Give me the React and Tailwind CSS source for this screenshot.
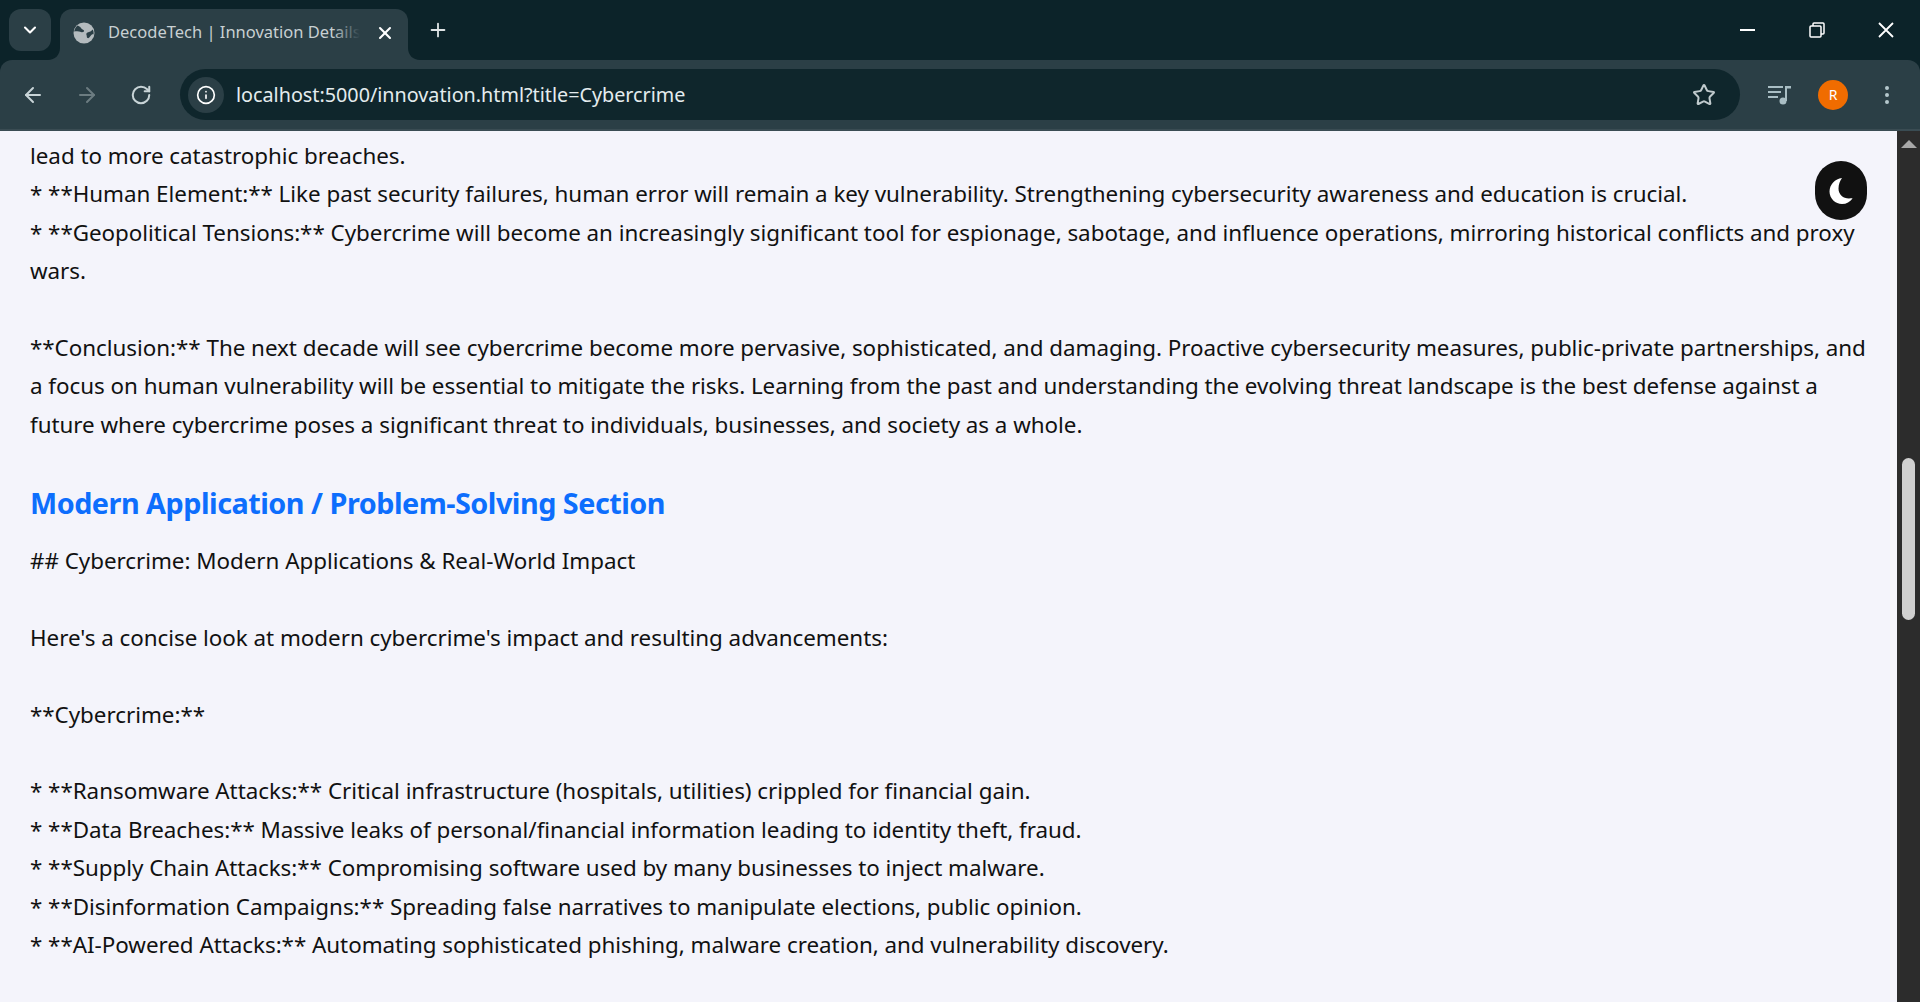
import { ArrowLeft, ArrowRight, RotateCw, Info, Star, ChevronDown, X, Plus, MoreVertical } from 'lucide-react';

const lines = [
  'lead to more catastrophic breaches.',
  '* **Human Element:** Like past security failures, human error will remain a key vulnerability. Strengthening cybersecurity awareness and education is crucial.',
  '* **Geopolitical Tensions:** Cybercrime will become an increasingly significant tool for espionage, sabotage, and influence operations, mirroring historical conflicts and proxy',
  'wars.',
  '',
  '**Conclusion:** The next decade will see cybercrime become more pervasive, sophisticated, and damaging. Proactive cybersecurity measures, public-private partnerships, and',
  'a focus on human vulnerability will be essential to mitigate the risks. Learning from the past and understanding the evolving threat landscape is the best defense against a',
  'future where cybercrime poses a significant threat to individuals, businesses, and society as a whole.',
];

const lines2 = [
  '## Cybercrime: Modern Applications & Real-World Impact',
  '',
  "Here's a concise look at modern cybercrime's impact and resulting advancements:",
  '',
  '**Cybercrime:**',
  '',
  '* **Ransomware Attacks:** Critical infrastructure (hospitals, utilities) crippled for financial gain.',
  '* **Data Breaches:** Massive leaks of personal/financial information leading to identity theft, fraud.',
  '* **Supply Chain Attacks:** Compromising software used by many businesses to inject malware.',
  '* **Disinformation Campaigns:** Spreading false narratives to manipulate elections, public opinion.',
  '* **AI-Powered Attacks:** Automating sophisticated phishing, malware creation, and vulnerability discovery.',
];

const TextLine = ({ text }) => (
  <div className="h-[38.4px] whitespace-nowrap leading-[38.4px]">{text}</div>
);

const TabBar = () => (
  <div className="flex h-[60px] bg-[#0c2329] pl-[9px] pt-[9px]">
    <div className="flex h-[42px] w-[42px] items-center justify-center rounded-xl bg-[#2b3f46] text-white">
      <ChevronDown size={20} strokeWidth={2.5} />
    </div>
    <div className="relative ml-[9px] flex h-[51px] w-[348px] items-center rounded-t-xl bg-[#2b3f46] pb-[4px] pl-[13px] pr-[13px]">
      <svg className="absolute -left-[12px] bottom-0" width="12" height="12" viewBox="0 0 12 12">
        <path d="M12 0V12H0C7 12 12 7 12 0Z" fill="#2b3f46" />
      </svg>
      <svg className="absolute -right-[12px] bottom-0" width="12" height="12" viewBox="0 0 12 12">
        <path d="M0 0V12H12C5 12 0 7 0 0Z" fill="#2b3f46" />
      </svg>
      {/* chrome's default globe favicon */}
      <svg className="shrink-0" width="22" height="22" viewBox="0 0 22 22">
        <circle cx="11" cy="11" r="10.500" fill="#b4bbbe" />
        <path d="M4.500 3.500C6 4.500 7 4.500 8 6C9 7.500 10.500 7.500 11 8.500C11.500 10 9.500 10.500 8 10C6 9.300 4.500 9 1.200 9.500C1.500 7 2.800 5 4.500 3.500Z" fill="#2b3f46" />
        <path d="M19.800 7.500C20.500 9 20.800 10.500 20.500 12.500C19.500 12 18.500 12.500 17.500 14C16.500 15.500 15.500 16.500 14.500 16C13.500 15.500 14 14 13.500 13C13 12 13.500 11 14.500 10.500C16.500 10 18.500 9 19.800 7.500Z" fill="#2b3f46" />
      </svg>
      <div className="relative ml-[13px] w-[252px] overflow-hidden whitespace-nowrap text-[16.5px] text-[#c8d0d2]">
        DecodeTech | Innovation Details
        <div className="absolute inset-y-0 right-0 w-[28px] bg-gradient-to-r from-transparent to-[#2b3f46]" />
      </div>
      <X size={20} strokeWidth={2.5} className="ml-auto text-white" />
    </div>
    <div className="ml-[9px] flex h-[42px] w-[42px] items-center justify-center text-[#dfe4e5]">
      <Plus size={22} strokeWidth={2} />
    </div>
    <div className="ml-auto flex h-[42px] text-white">
      <div className="flex w-[69px] items-center justify-center">
        <div className="h-[2px] w-[15px] bg-white" />
      </div>
      <div className="flex w-[69px] items-center justify-center">
        <svg width="16" height="16" viewBox="0 0 16 16" fill="none" stroke="currentColor" strokeWidth="1.5">
          <rect x="1" y="4" width="11" height="11" rx="1" />
          <path d="M4 4V2C4 1.400 4.400 1 5 1H14C14.600 1 15 1.400 15 2V11C15 11.600 14.600 12 14 12H12" />
        </svg>
      </div>
      <div className="flex w-[69px] items-center justify-center">
        <svg width="16" height="16" viewBox="0 0 16 16" fill="none" stroke="currentColor" strokeWidth="1.8">
          <path d="M1 1L15 15M15 1L1 15" />
        </svg>
      </div>
    </div>
  </div>
);

const Toolbar = () => (
  <div className="bg-[#0c2329]">
    <div className="flex h-[71px] items-center rounded-t-xl border-b-2 border-[#3a4c53] bg-[#2b3f46]">
      <ArrowLeft size={24} strokeWidth={2} className="ml-[21px] text-[#c8d4d7]" />
      <ArrowRight size={24} strokeWidth={2} className="ml-[30px] text-[#6c7c81]" />
      <RotateCw size={22} strokeWidth={2.2} className="ml-[31px] text-[#c8d4d7]" />
      <div className="ml-[28px] flex h-[51px] w-[1560px] items-center rounded-full bg-[#0f262c] pl-[8px] pr-[24px]">
        <div className="flex h-[36px] w-[36px] items-center justify-center rounded-full bg-[#2b3f46] text-white">
          <Info size={20} strokeWidth={2} />
        </div>
        <div className="ml-[12px] whitespace-nowrap text-[19.75px] text-[#e4ecee]">
          localhost:5000/innovation.html?title=Cybercrime
        </div>
        <Star size={24} strokeWidth={2} className="ml-auto text-[#c0cacd]" />
      </div>
      <svg className="ml-[28px] text-[#a9bec4]" width="24" height="20" viewBox="0 0 24 20" fill="currentColor">
        <rect x="0" y="1" width="15" height="2" />
        <rect x="0" y="6" width="13" height="2" />
        <rect x="0" y="11" width="10" height="2" />
        <circle cx="15" cy="16" r="3.500" />
        <path d="M17 1H23V3.500H19V16H17Z" />
      </svg>
      <div className="ml-[26px] flex h-[30px] w-[30px] items-center justify-center rounded-full bg-[#f06c00] text-[14px] text-white">
        R
      </div>
      <MoreVertical size={24} strokeWidth={2} className="ml-[27px] text-[#b5c8cd]" />
    </div>
  </div>
);

const Scrollbar = () => (
  <div className="flex w-[23px] shrink-0 flex-col items-center bg-[#2c2c2c]">
    <div className="mt-[9px] h-0 w-0 border-x-[8px] border-b-[8px] border-x-transparent border-b-[#a8a8a8]" />
    <div className="mt-[310px] h-[162px] w-[13px] rounded-full bg-[#d0d0d0]" />
  </div>
);

const App = () => (
  <div className="flex h-[1002px] w-[1920px] flex-col overflow-hidden bg-[#f4f4fb] font-['Noto_Sans',sans-serif]">
    <TabBar />
    <Toolbar />
    <div className="flex min-h-0 flex-1">
      <div className="relative min-w-0 flex-1 overflow-hidden px-[30px] pt-[6px] text-[22.4px] tracking-[-0.03px] text-[#111111]">
        {lines.map((text, i) => (
          <TextLine key={i} text={text} />
        ))}
        <h2 className="mt-[35px] mb-[15px] h-[48px] text-[28.8px] font-bold leading-[48px] tracking-[-0.5px] text-[#0d6efd]">
          Modern Application / Problem-Solving Section
        </h2>
        {lines2.map((text, i) => (
          <TextLine key={i} text={text} />
        ))}
        <button className="absolute right-[30px] top-[30px] flex h-[59px] w-[52px] items-center justify-center rounded-full bg-[#111111]">
          <svg width="24" height="26" viewBox="0 0 24 26" fill="white">
            <path d="M13 0C6 1 0.500 6.500 0.500 13.500C0.500 20.500 6.500 26 13 26C17.500 26 21 24 23.500 20.500C23 20 22 20.500 20 20.500C14 20.500 9.500 16.500 9.500 10.500C9.500 6 11 3 13 0Z" />
          </svg>
        </button>
      </div>
      <Scrollbar />
    </div>
  </div>
);

export default App;
